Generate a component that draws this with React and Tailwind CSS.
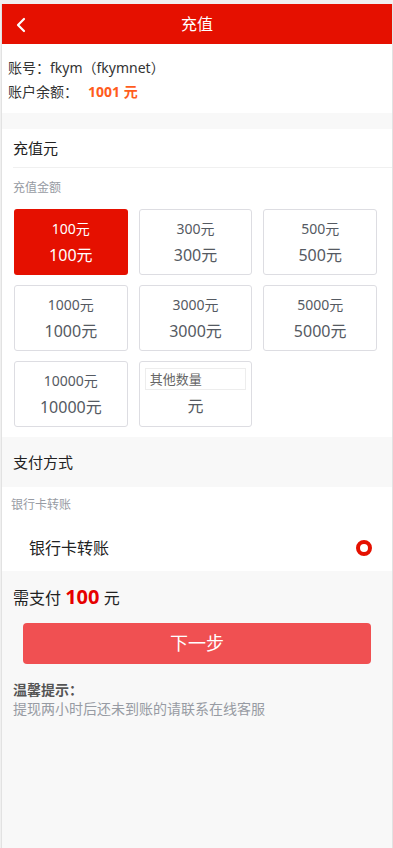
import React from "react";

const amounts = ["100", "300", "500", "1000", "3000", "5000", "10000"];

export default function App() {
  return (
    <div
      className="min-h-[848px] bg-[#f0f0f0] pt-[4px] pl-[1px]"
      style={{ fontFamily: '"Noto Sans", "Noto Sans CJK SC", sans-serif' }}
    >
      <div className="w-[392px] min-h-[844px] border-l border-r border-[#e2e2e2] bg-[#f8f8f8]">
        {/* header */}
        <div className="relative h-[40px] bg-[#e51000] flex items-center justify-center">
          <svg className="absolute left-[13px] top-[13px]" width="12" height="16" viewBox="0 0 12 16">
            <path d="M9 2 L3 8 L9 14" fill="none" stroke="#fff" strokeWidth="2.2" strokeLinecap="round" strokeLinejoin="round" />
          </svg>
          <span className="text-white text-[16px] leading-none">充值</span>
        </div>

        {/* account */}
        <div className="bg-white pt-[12px] pb-[9px] pl-[6px]">
          <div className="text-[14px] leading-[24px] text-[#333]">账号：fkym（fkymnet）</div>
          <div className="text-[14px] leading-[24px] text-[#333]">
            账户余额：<span className="ml-[10px] font-bold text-[#ff5c1c]">1001 元</span>
          </div>
        </div>

        <div className="h-[16px]" />

        {/* recharge */}
        <div className="bg-white pb-[10px]">
          <div className="ml-[11px] h-[39px] flex items-center border-b border-[#f0f0f0] text-[15px] text-[#222]">充值元</div>
          <div className="pl-[11px] pt-[12px] text-[12px] leading-[16px] text-[#979ba3]">充值金额</div>
          <div className="grid grid-cols-3 gap-x-[11px] gap-y-[10px] pl-[12px] pr-[15px] pt-[13px]">
            {amounts.map((a, i) => (
              <div
                key={a}
                className={
                  i === 0
                    ? "h-[66px] rounded-[3px] bg-[#e51000] flex flex-col items-center justify-center text-white"
                    : "h-[66px] rounded-[3px] border border-[#dddde2] bg-white flex flex-col items-center justify-center text-[#555a62]"
                }
              >
                <div className="text-[14px] leading-[20px]">{a}元</div>
                <div className="text-[16px] leading-[22px] mt-[5px]">{a}元</div>
              </div>
            ))}
            <div className="h-[66px] rounded-[3px] border border-[#dddde2] bg-white flex flex-col items-center px-[5px] pt-[6px]">
              <div className="w-full h-[22px] border border-[#ededed] text-[13px] leading-[20px] text-[#666] pl-[4px]">其他数量</div>
              <div className="text-[16px] leading-[22px] mt-[5px] text-[#555a62]">元</div>
            </div>
          </div>
        </div>

        {/* pay method */}
        <div className="h-[50px] flex items-center pl-[11px] text-[15px] text-[#222]">支付方式</div>
        <div className="bg-white">
          <div className="pl-[9px] pt-[10px] text-[12px] leading-[16px] text-[#979ba3]">银行卡转账</div>
          <div className="h-[58px] pt-[12px] flex items-center justify-between pl-[27px] pr-[20px]">
            <span className="text-[16px] text-[#222]">银行卡转账</span>
            <span className="w-[16px] h-[16px] rounded-full border-[4px] border-[#e51000] bg-white" />
          </div>
        </div>

        {/* pay */}
        <div className="pl-[11px] pt-[14px] text-[16px] leading-[24px] text-[#222]">
          需支付 <span className="text-[20px] font-bold text-[#e60000]">100</span> 元
        </div>
        <div className="px-[21px] pt-[13px]">
          <div className="h-[41px] rounded-[4px] bg-[#f05052] flex items-center justify-center text-white text-[18px]">下一步</div>
        </div>
        <div className="pl-[11px] pt-[17px] text-[14px] leading-[18px] font-bold text-[#555]">温馨提示：</div>
        <div className="pl-[11px] text-[14px] leading-[20px] text-[#979ba3]">提现两小时后还未到账的请联系在线客服</div>
      </div>
    </div>
  );
}
